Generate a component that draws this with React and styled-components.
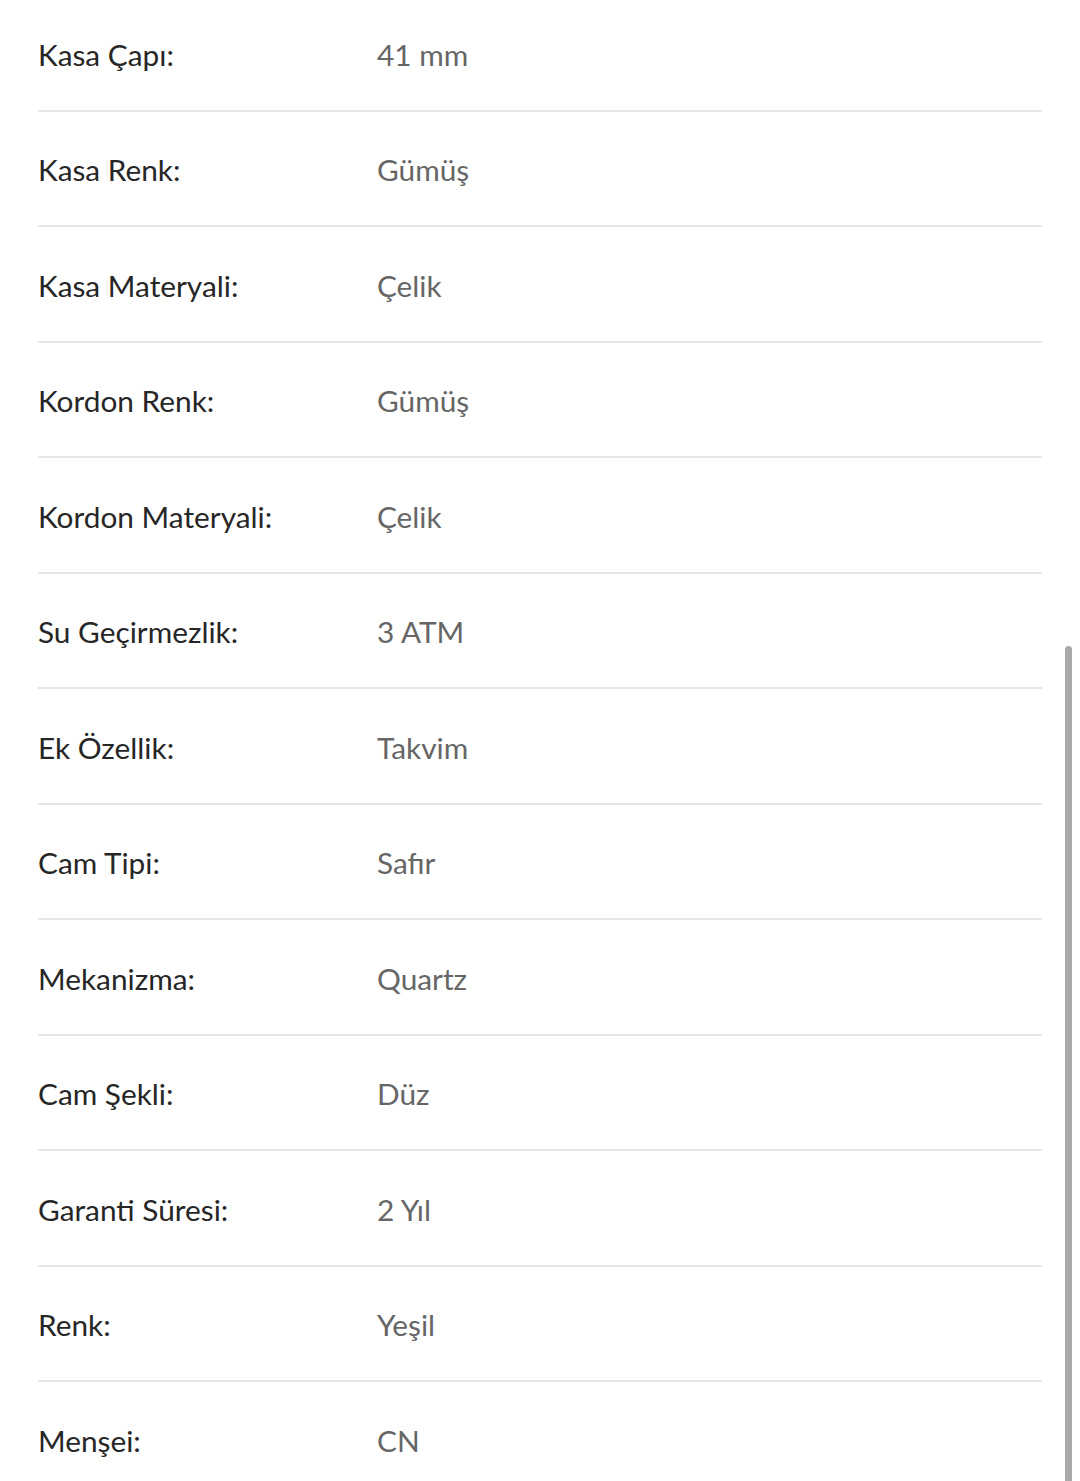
import styled, { createGlobalStyle } from 'styled-components';

const specs = [
  ['Kasa Çapı:', '41 mm'],
  ['Kasa Renk:', 'Gümüş'],
  ['Kasa Materyali:', 'Çelik'],
  ['Kordon Renk:', 'Gümüş'],
  ['Kordon Materyali:', 'Çelik'],
  ['Su Geçirmezlik:', '3 ATM'],
  ['Ek Özellik:', 'Takvim'],
  ['Cam Tipi:', 'Safır'],
  ['Mekanizma:', 'Quartz'],
  ['Cam Şekli:', 'Düz'],
  ['Garanti Süresi:', '2 Yıl'],
  ['Renk:', 'Yeşil'],
  ['Menşei:', 'CN'],
];

function App() {
  return (
    <>
      <GlobalStyle />
      <Page>
        <SpecList>
          {specs.map(([label, value]) => (
            <SpecRow key={label}>
              <SpecLabel>{label}</SpecLabel>
              <SpecValue>{value}</SpecValue>
            </SpecRow>
          ))}
        </SpecList>
      </Page>
      <ScrollThumb />
    </>
  );
}

export default App;

const GlobalStyle = createGlobalStyle`
  html, body {
    margin: 0;
    padding: 0;
    background: #ffffff;
    overflow: hidden;
  }
  body {
    font-family: Lato, "Open Sans", sans-serif;
  }
`;

const Page = styled.div`
  width: 1080px;
  height: 1481px;
  overflow: hidden;
  background: #ffffff;
`;

const SpecList = styled.div`
  margin: -4px 38px 0 38px;
  width: 1004px;
  display: flex;
  flex-direction: column;
`;

const SpecRow = styled.div`
  box-sizing: border-box;
  height: 115.5px;
  padding-top: 3px;
  display: grid;
  grid-template-columns: 339px 1fr;
  align-items: center;
  border-bottom: 2px solid #e6e6e6;
`;

const SpecLabel = styled.span`
  font-size: 29.8px;
  color: #262626;
`;

const SpecValue = styled.span`
  font-size: 29.8px;
  color: #666666;
`;

const ScrollThumb = styled.div`
  position: fixed;
  left: 1065px;
  top: 646px;
  width: 7px;
  height: 860px;
  border-radius: 4px;
  background: #a9a9a9;
`;
